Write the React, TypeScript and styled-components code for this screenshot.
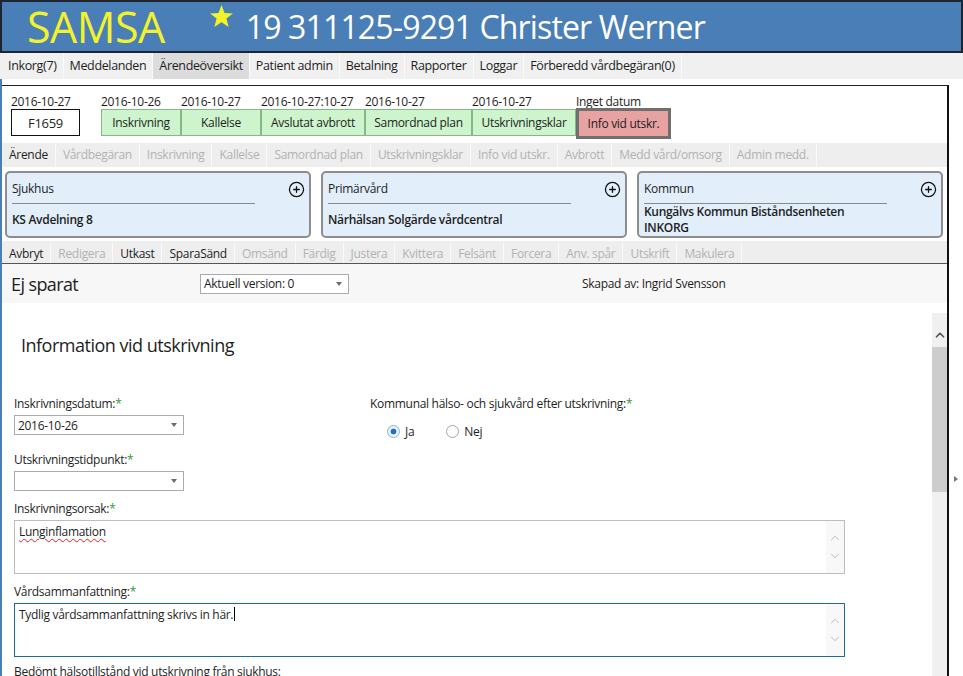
import styled, { createGlobalStyle } from 'styled-components';
import { CirclePlus, ChevronUp, ChevronDown } from 'lucide-react';

const GlobalStyle = createGlobalStyle`
  html, body { margin: 0; padding: 0; background: #fff; }
  body {
    width: 963px;
    height: 676px;
    overflow: hidden;
    font-family: "Open Sans", "Noto Sans", "Liberation Sans", sans-serif;
    font-size: 12px;
    letter-spacing: -0.3px;
    color: #1e1e1e;
  }
  * { box-sizing: border-box; }
`;

const Page = styled.div`
  display: flex;
  flex-direction: column;
  height: 676px;
`;

const Header = styled.header`
  display: flex;
  align-items: center;
  height: 53px;
  background: #4a7eb7;
  border: 2px solid #1d2530;
`;

const Logo = styled.div`
  margin-left: 25px;
  color: #f2f22b;
  font-size: 43px;
  line-height: 49px;
  letter-spacing: -0.5px;
`;

const Star = styled.svg`
  align-self: flex-start;
  margin: 2px 0 0 44px;
`;

const Patient = styled.div`
  margin-left: 12px;
  color: #fff;
  font-size: 32px;
  line-height: 40px;
  letter-spacing: -0.85px;
`;

const MenuBar = styled.nav`
  display: flex;
  height: 26px;
  padding-left: 2px;
  background: #f0f0f0;
`;

const MenuItem = styled.div<{ $active?: boolean }>`
  padding: 0 6px;
  line-height: 26px;
  font-size: 12.5px;
  letter-spacing: -0.35px;
  border-right: 1px solid #fafafa;
  background: ${(p) => (p.$active ? '#dcdcdc' : 'transparent')};
`;

const Body = styled.div`
  flex: 1;
  display: flex;
  min-height: 0;
`;

const Workspace = styled.div`
  flex: 1;
  display: flex;
  flex-direction: column;
  padding-top: 6px;
  border-left: 2px solid #4a7eb7;
  min-height: 0;
`;

const Panel = styled.div`
  flex: 1;
  display: flex;
  flex-direction: column;
  min-height: 0;
  overflow: hidden;
  border-top: 1px solid #222;
  border-right: 2px solid #111;
`;

const Splitter = styled.div`
  width: 14px;
  display: flex;
  justify-content: center;
  padding-top: 397px;
  &::before {
    content: '';
    width: 0;
    height: 0;
    border-top: 3px solid transparent;
    border-bottom: 3px solid transparent;
    border-left: 4px solid #777;
  }
`;

const Timeline = styled.div`
  display: flex;
  height: 57px;
  padding: 8px 0 0 9px;
`;

const Stage = styled.div`
  display: flex;
  flex-direction: column;
`;

const DateLabel = styled.div`
  line-height: 15px;
  font-size: 12px;
  white-space: nowrap;
`;

const IdBox = styled.div`
  width: 69px;
  height: 27px;
  border: 1px solid #111;
  background: #fff;
  display: flex;
  align-items: center;
  justify-content: center;
  font-size: 13px;
`;

const Stages = styled.div`
  display: flex;
  margin-left: 21px;
`;

const StageBox = styled.div<{ $w: number; $current?: boolean }>`
  width: ${(p) => p.$w}px;
  height: ${(p) => (p.$current ? 31 : 27)}px;
  margin-top: ${(p) => (p.$current ? -1 : 0)}px;
  border: ${(p) => (p.$current ? '3px solid #6f6f6f' : '1px solid #84b884')};
  background: ${(p) => (p.$current ? '#e8a2a2' : '#cdf4cd')};
  display: flex;
  align-items: center;
  justify-content: center;
  font-size: 12px;
  white-space: nowrap;
`;

const TabRow = styled.div<{ $rule?: boolean }>`
  display: flex;
  height: ${(p) => (p.$rule ? 23 : 24)}px;
  padding-top: ${(p) => (p.$rule ? 2 : 1)}px;
  background: #eeeeee;
  border-bottom: ${(p) => (p.$rule ? '1px solid #555' : 'none')};
`;

const Tab = styled.div<{ $enabled?: boolean }>`
  padding: 0 7px;
  line-height: 22px;
  font-size: 12px;
  color: ${(p) => (p.$enabled ? '#1e1e1e' : '#b2b2b2')};
  border-right: 1px solid #fafafa;
  white-space: nowrap;
`;

const CardRow = styled.div`
  display: flex;
  gap: 10px;
  padding: 4px 4px 3px 3px;
`;

const Card = styled.div`
  flex: 1;
  height: 67px;
  display: flex;
  flex-direction: column;
  padding: 1px 4px 0 5px;
  background: #e2eefa;
  border: 2px solid #8d8d8d;
  border-radius: 5px;
`;

const CardHead = styled.div`
  display: flex;
  justify-content: space-between;
  align-items: flex-start;
`;

const CardTitle = styled.div`
  width: 243px;
  padding: 7px 0 6px;
  line-height: 16px;
  border-bottom: 1px solid #8a8a8a;
`;

const PlusIcon = styled(CirclePlus)`
  margin-top: 7px;
`;

const CardValue = styled.div`
  flex: 1;
  display: flex;
  align-items: center;
  font-weight: 600;
  line-height: 16px;
`;

const StatusRow = styled.div`
  display: grid;
  grid-template-columns: 189px 382px 1fr;
  align-items: center;
  height: 39px;
  padding-left: 9px;
  background: #f7f7f7;
`;

const Status = styled.div`
  font-size: 18px;
  letter-spacing: -0.6px;
`;

const Select = styled.div<{ $w: number }>`
  width: ${(p) => p.$w}px;
  height: 20px;
  display: flex;
  align-items: center;
  padding: 0 6px 0 3px;
  background: #fff;
  border: 1px solid #a9abb0;
  font-size: 12px;
  &::after {
    content: '';
    margin-left: auto;
    border-left: 3.5px solid transparent;
    border-right: 3.5px solid transparent;
    border-top: 4px solid #6d6d6d;
  }
`;

const FormArea = styled.div`
  flex: 1;
  display: flex;
  min-height: 0;
  background: #fff;
`;

const FormContent = styled.div`
  flex: 1;
  padding-left: 12px;
`;

const Heading = styled.h2`
  margin: 29px 0 0 7px;
  font-size: 18px;
  font-weight: 400;
  line-height: 26px;
  letter-spacing: -0.5px;
`;

const Columns = styled.div`
  display: grid;
  grid-template-columns: 356px 1fr;
  margin-top: 38px;
`;

const Field = styled.div<{ $gap?: number }>`
  display: flex;
  flex-direction: column;
  margin-top: ${(p) => p.$gap ?? 0}px;
`;

const Label = styled.div`
  line-height: 16px;
  font-size: 12px;
  margin-bottom: 3px;
  & > b {
    font-weight: 400;
    color: #2f9b2f;
  }
`;

const RadioRow = styled.div`
  display: flex;
  gap: 32px;
  margin: 8px 0 0 17px;
`;

const RadioOption = styled.label`
  display: flex;
  align-items: center;
  gap: 5px;
  font-size: 12px;
`;

const RadioDot = styled.span<{ $checked?: boolean }>`
  width: 13px;
  height: 13px;
  border-radius: 50%;
  border: 1px solid ${(p) => (p.$checked ? '#8fb1d8' : '#a6a6a6')};
  background: ${(p) => (p.$checked ? 'radial-gradient(circle, #1f6fc4 0 2.6px, #e9f1fb 3.2px)' : '#fff')};
`;

const TextBox = styled.div<{ $focused?: boolean }>`
  width: 831px;
  height: 54px;
  display: flex;
  justify-content: space-between;
  background: #fff;
  border: 1px solid ${(p) => (p.$focused ? '#1a6aa6' : '#bdbdbd')};
`;

const TextValue = styled.div`
  padding: 3px 4px;
  font-size: 12px;
  line-height: 16px;
`;

const Misspelled = styled.span`
  text-decoration: underline wavy #e02020;
  text-decoration-thickness: 1px;
  text-underline-offset: 2px;
`;

const Caret = styled.span`
  display: inline-block;
  width: 1px;
  height: 14px;
  margin-left: 1px;
  vertical-align: -2px;
  background: #000;
`;

const Spinner = styled.div`
  width: 18px;
  display: flex;
  flex-direction: column;
  align-items: center;
  justify-content: center;
  gap: 4px;
  background: #f8f8f8;
  color: #b0b0b0;
`;

const ScrollTrack = styled.div`
  width: 15px;
  margin-top: 10px;
  display: flex;
  flex-direction: column;
  background: #f0f0f0;
`;

const ScrollArrow = styled.div`
  height: 34px;
  display: flex;
  align-items: center;
  justify-content: center;
  padding-top: 10px;
  color: #555;
`;

const ScrollThumb = styled.div`
  height: 145px;
  background: #cdcdcd;
`;

const menu = ['Inkorg(7)', 'Meddelanden', 'Ärendeöversikt', 'Patient admin', 'Betalning', 'Rapporter', 'Loggar', 'Förberedd vårdbegäran(0)'];

const stages = [
  { date: '2016-10-26', name: 'Inskrivning', w: 80 },
  { date: '2016-10-27', name: 'Kallelse', w: 80 },
  { date: '2016-10-27:10-27', name: 'Avslutat avbrott', w: 104 },
  { date: '2016-10-27', name: 'Samordnad plan', w: 107 },
  { date: '2016-10-27', name: 'Utskrivningsklar', w: 104 },
];

const tabs = ['Ärende', 'Vårdbegäran', 'Inskrivning', 'Kallelse', 'Samordnad plan', 'Utskrivningsklar', 'Info vid utskr.', 'Avbrott', 'Medd vård/omsorg', 'Admin medd.'];

const actions: [string, boolean][] = [
  ['Avbryt', true], ['Redigera', false], ['Utkast', true], ['SparaSänd', true], ['Omsänd', false],
  ['Färdig', false], ['Justera', false], ['Kvittera', false], ['Felsänt', false], ['Forcera', false],
  ['Anv. spår', false], ['Utskrift', false], ['Makulera', false],
];

const units = [
  { title: 'Sjukhus', value: ['KS Avdelning 8'] },
  { title: 'Primärvård', value: ['Närhälsan Solgärde vårdcentral'] },
  { title: 'Kommun', value: ['Kungälvs Kommun Biståndsenheten', 'INKORG'] },
];

const Req = () => <b>*</b>;

const App = () => {
  return (
    <Page>
      <GlobalStyle />
      <Header>
        <Logo>SAMSA</Logo>
        <Star width="25" height="25" viewBox="0 0 24 24">
          <polygon points="12,1 14.9,8.6 23,9 16.7,14 18.9,22 12,17.5 5.1,22 7.3,14 1,9 9.1,8.6" fill="#f2f22b" />
        </Star>
        <Patient>19 311125-9291 Christer Werner</Patient>
      </Header>
      <MenuBar>
        {menu.map((m) => (
          <MenuItem key={m} $active={m === 'Ärendeöversikt'}>{m}</MenuItem>
        ))}
      </MenuBar>
      <Body>
        <Workspace>
          <Panel>
            <Timeline>
              <Stage>
                <DateLabel>2016-10-27</DateLabel>
                <IdBox>F1659</IdBox>
              </Stage>
              <Stages>
                {stages.map((s) => (
                  <Stage key={s.name}>
                    <DateLabel>{s.date}</DateLabel>
                    <StageBox $w={s.w}>{s.name}</StageBox>
                  </Stage>
                ))}
                <Stage>
                  <DateLabel>Inget datum</DateLabel>
                  <StageBox $w={95} $current>Info vid utskr.</StageBox>
                </Stage>
              </Stages>
            </Timeline>

            <TabRow>
              {tabs.map((t) => (
                <Tab key={t} $enabled={t === 'Ärende'}>{t}</Tab>
              ))}
            </TabRow>

            <CardRow>
              {units.map((u) => (
                <Card key={u.title}>
                  <CardHead>
                    <CardTitle>{u.title}</CardTitle>
                    <PlusIcon size={17} strokeWidth={1.8} color="#111" />
                  </CardHead>
                  <CardValue>
                    <div>
                      {u.value.map((v) => (
                        <div key={v}>{v}</div>
                      ))}
                    </div>
                  </CardValue>
                </Card>
              ))}
            </CardRow>

            <TabRow $rule>
              {actions.map(([a, on]) => (
                <Tab key={a} $enabled={on}>{a}</Tab>
              ))}
            </TabRow>

            <StatusRow>
              <Status>Ej sparat</Status>
              <Select $w={149}>Aktuell version: 0</Select>
              <div>Skapad av: Ingrid Svensson</div>
            </StatusRow>

            <FormArea>
              <FormContent>
                <Heading>Information vid utskrivning</Heading>
                <Columns>
                  <div>
                    <Field>
                      <Label>Inskrivningsdatum:<Req /></Label>
                      <Select $w={170}>2016-10-26</Select>
                    </Field>
                    <Field $gap={17}>
                      <Label>Utskrivningstidpunkt:<Req /></Label>
                      <Select $w={170} />
                    </Field>
                  </div>
                  <Field>
                    <Label>Kommunal hälso- och sjukvård efter utskrivning:<Req /></Label>
                    <RadioRow>
                      <RadioOption><RadioDot $checked />Ja</RadioOption>
                      <RadioOption><RadioDot />Nej</RadioOption>
                    </RadioRow>
                  </Field>
                </Columns>
                <Field $gap={10}>
                  <Label>Inskrivningsorsak:<Req /></Label>
                  <TextBox>
                    <TextValue><Misspelled>Lunginflamation</Misspelled></TextValue>
                    <Spinner>
                      <ChevronUp size={14} strokeWidth={1.5} />
                      <ChevronDown size={14} strokeWidth={1.5} />
                    </Spinner>
                  </TextBox>
                </Field>
                <Field $gap={10}>
                  <Label>Vårdsammanfattning:<Req /></Label>
                  <TextBox $focused>
                    <TextValue>Tydlig vårdsammanfattning skrivs in här.<Caret /></TextValue>
                    <Spinner>
                      <ChevronUp size={14} strokeWidth={1.5} />
                      <ChevronDown size={14} strokeWidth={1.5} />
                    </Spinner>
                  </TextBox>
                </Field>
                <Field $gap={7}>
                  <Label>Bedömt hälsotillstånd vid utskrivning från sjukhus:</Label>
                </Field>
              </FormContent>
              <ScrollTrack>
                <ScrollArrow>
                  <ChevronUp size={14} strokeWidth={3} />
                </ScrollArrow>
                <ScrollThumb />
              </ScrollTrack>
            </FormArea>
          </Panel>
        </Workspace>
        <Splitter />
      </Body>
    </Page>
  );
};

export default App;
